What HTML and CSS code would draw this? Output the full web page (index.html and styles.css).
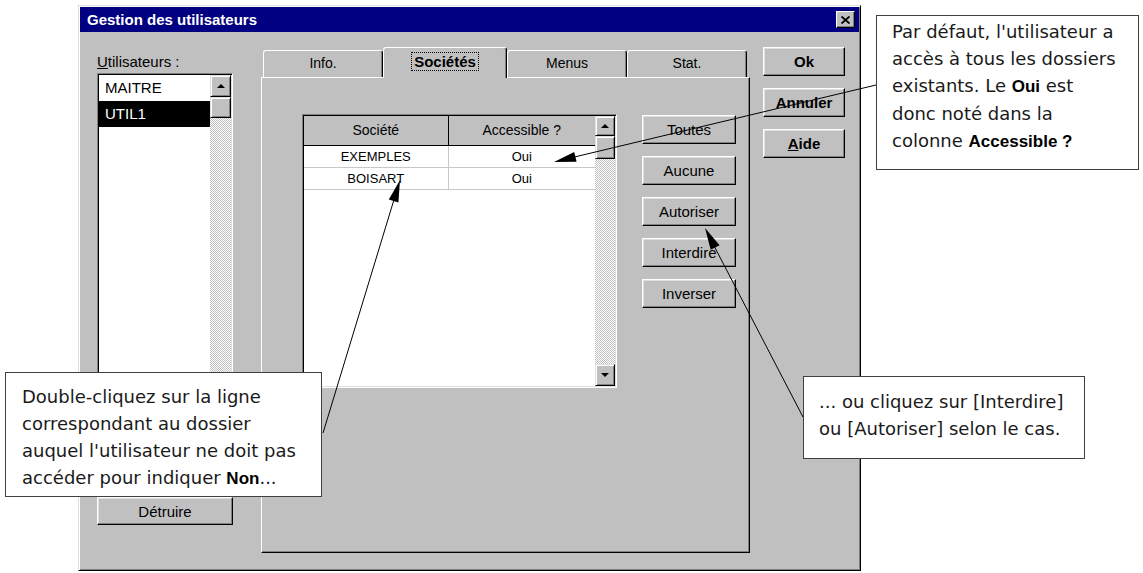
FILE: index.html
```html
<!DOCTYPE html>
<html lang="fr">
<head>
    <meta charset="UTF-8">
    <title>Gestion des utilisateurs</title>
    <link rel="stylesheet" href="styles.css">
</head>
<body>
    <div class="dialog">
        <div class="titlebar">
            <span class="title">Gestion des utilisateurs</span>
            <span class="close">
                <svg width="9" height="8" viewBox="0 0 9 8"><path d="M0.5 0.5 L8.5 7.5 M8.5 0.5 L0.5 7.5" stroke="#000" stroke-width="1.8" fill="none"/></svg>
            </span>
        </div>
        <div class="content">
            <div class="users">
                <div class="label"><u>U</u>tilisateurs :</div>
                <div class="listbox">
                    <ul class="items">
                        <li>MAITRE</li>
                        <li class="selected">UTIL1</li>
                    </ul>
                    <div class="vscroll">
                        <div class="sbtn"><svg width="8" height="4" viewBox="0 0 8 4"><polygon points="0,4 8,4 4,0" fill="#000"/></svg></div>
                        <div class="thumb"></div>
                        <div class="track"></div>
                        <div class="sbtn"><svg width="8" height="4" viewBox="0 0 8 4"><polygon points="0,0 8,0 4,4" fill="#000"/></svg></div>
                    </div>
                </div>
                <button class="btn wide">Détruire</button>
            </div>

            <div class="tabs">
                <div class="tabrow">
                    <div class="tab">Info.</div>
                    <div class="tab active"><span class="focus">Sociétés</span></div>
                    <div class="tab">Menus</div>
                    <div class="tab">Stat.</div>
                </div>
                <div class="panel">
                    <div class="grid">
                        <div class="cells">
                            <table>
                                <tr><th>Société</th><th>Accessible ?</th></tr>
                                <tr><td>EXEMPLES</td><td>Oui</td></tr>
                                <tr><td>BOISART</td><td>Oui</td></tr>
                            </table>
                        </div>
                        <div class="vscroll narrow">
                            <div class="sbtn small"><svg width="8" height="4" viewBox="0 0 8 4"><polygon points="0,4 8,4 4,0" fill="#000"/></svg></div>
                            <div class="thumb tall"></div>
                            <div class="track"></div>
                            <div class="sbtn"><svg width="8" height="4" viewBox="0 0 8 4"><polygon points="0,0 8,0 4,4" fill="#000"/></svg></div>
                        </div>
                    </div>
                    <div class="actions">
                        <button class="btn">Toutes</button>
                        <button class="btn">Aucune</button>
                        <button class="btn">Autoriser</button>
                        <button class="btn">Interdire</button>
                        <button class="btn">Inverser</button>
                    </div>
                </div>
            </div>

            <div class="main-actions">
                <button class="btn bold">Ok</button>
                <button class="btn bold">Annuler</button>
                <button class="btn bold"><u>A</u>ide</button>
            </div>
        </div>
    </div>

    <div class="callout note-top">
        Par défaut, l'utilisateur a<br>
        accès à tous les dossiers<br>
        existants. Le <b>Oui</b> est<br>
        donc noté dans la<br>
        colonne <b>Accessible ?</b>
    </div>
    <div class="callout note-left">
        Double-cliquez sur la ligne<br>
        correspondant au dossier<br>
        auquel l'utilisateur ne doit pas<br>
        accéder pour indiquer <b>Non</b>...
    </div>
    <div class="callout note-right">
        ... ou cliquez sur [Interdire]<br>
        ou [Autoriser] selon le cas.
    </div>

    <svg class="arrows" width="1143" height="573" viewBox="0 0 1143 573">
        <line x1="876" y1="85" x2="566" y2="159" stroke="#000" stroke-width="1"/>
        <polygon points="554,162 574.2,152 576.6,161.8" fill="#000"/>
        <line x1="323" y1="433" x2="396" y2="193" stroke="#000" stroke-width="1"/>
        <polygon points="400,180 398.4,202.5 388.8,199.5" fill="#000"/>
        <line x1="803" y1="417" x2="711" y2="240" stroke="#000" stroke-width="1"/>
        <polygon points="705,228 719.6,245.2 710.7,249.8" fill="#000"/>
    </svg>
</body>
</html>
```

FILE: styles.css
```css
* {
    box-sizing: border-box;
}
body {
    margin: 0;
    width: 1143px;
    height: 573px;
    position: relative;
    overflow: hidden;
    background: #fff;
    font-family: 'Liberation Sans', Arial, sans-serif;
    color: #000;
}

/* window frame */
.dialog {
    margin: 5px 0 0 78px;
    width: 783px;
    height: 566px;
    padding: 1px;
    background: #c0c0c0;
    border: 1px solid;
    border-color: #dfdfdf #000 #000 #dfdfdf;
    box-shadow: inset 1px 1px #fff, inset -1px -1px #808080;
}
.titlebar {
    height: 25px;
    background: #000080;
    display: flex;
    align-items: center;
    justify-content: space-between;
    padding: 0 4px 0 7px;
}
.title {
    color: #fff;
    font-weight: bold;
    font-size: 15px;
}
.close {
    width: 19px;
    height: 17px;
    background: #c0c0c0;
    border: 1px solid;
    border-color: #fff #000 #000 #fff;
    box-shadow: inset -1px -1px #808080;
    display: flex;
    align-items: center;
    justify-content: center;
}
.content {
    display: flex;
    padding: 15px 14px 0 17px;
}

/* shared controls */
.btn {
    display: block;
    width: 100%;
    height: 29px;
    padding: 0;
    background: #c0c0c0;
    border: 1px solid;
    border-color: #fff #000 #000 #fff;
    box-shadow: inset -1px -1px #808080, inset 1px 1px #dfdfdf;
    font-family: 'Liberation Sans', Arial, sans-serif;
    font-size: 15px;
    color: #000;
}
.btn.bold {
    font-weight: bold;
}
.vscroll {
    width: 21px;
    display: flex;
    flex-direction: column;
}
.vscroll.narrow {
    width: 20px;
}
.sbtn, .thumb {
    height: 22px;
    background: #c0c0c0;
    border: 1px solid;
    border-color: #dfdfdf #000 #000 #dfdfdf;
    box-shadow: inset 1px 1px #fff, inset -1px -1px #808080;
    display: flex;
    align-items: center;
    justify-content: center;
}
.sbtn.small {
    height: 20px;
}
.thumb {
    height: 21px;
}
.thumb.tall {
    height: 23px;
}
.track {
    flex: 1;
    background: repeating-conic-gradient(#fff 0 25%, #c0c0c0 0 50%) 0 0 / 2px 2px;
}

/* users column */
.users {
    width: 136px;
    display: flex;
    flex-direction: column;
}
.label {
    margin-top: 7px;
    font-size: 15px;
    line-height: 16px;
}
.listbox {
    margin-top: 3px;
    height: 410px;
    display: flex;
    padding: 1px;
    border: 1px solid;
    border-color: #808080 #fff #fff #808080;
    box-shadow: inset 1px 1px #000, inset -1px -1px #dfdfdf;
}
.items {
    flex: 1;
    margin: 0;
    padding: 0;
    list-style: none;
    background: #fff;
}
.items li {
    height: 26px;
    line-height: 26px;
    padding-left: 6px;
    font-size: 15px;
}
.items li.selected {
    background: #000;
    color: #fff;
}
.btn.wide {
    margin-top: 14px;
    height: 28px;
}

/* tabs */
.tabs {
    width: 489px;
    margin-left: 28px;
    display: flex;
    flex-direction: column;
}
.tabrow {
    height: 30px;
    display: flex;
    align-items: flex-end;
    padding-left: 2px;
}
.tab {
    flex: 0 0 120px;
    height: 27px;
    padding-bottom: 2px;
    border: 1px solid;
    border-bottom: 0;
    border-color: #fff #000 transparent #fff;
    border-radius: 3px 3px 0 0;
    box-shadow: inset -1px 0 #808080;
    font-size: 14px;
    display: flex;
    align-items: center;
    justify-content: center;
}
.tab.active {
    flex-basis: 124px;
    height: 31px;
    padding-bottom: 4px;
    margin-bottom: -1px;
    position: relative;
    z-index: 1;
    background: #c0c0c0;
    font-size: 15px;
    font-weight: bold;
}
.focus {
    outline: 1px dotted #000;
    padding: 0 2px;
}
.panel {
    height: 476px;
    display: flex;
    align-items: flex-start;
    padding: 36px 0 0 40px;
    border: 1px solid;
    border-color: #fff #000 #000 #fff;
    box-shadow: inset -1px -1px #808080;
}

/* grid */
.grid {
    width: 315px;
    height: 274px;
    display: flex;
    padding: 1px;
    border: 1px solid;
    border-color: #808080 #fff #fff #808080;
    box-shadow: inset 1px 1px #000, inset -1px -1px #dfdfdf;
}
.cells {
    flex: 1;
    background: #fff;
}
table {
    width: 100%;
    border-collapse: collapse;
}
th {
    height: 29px;
    background: #c0c0c0;
    border-bottom: 1px solid #000;
    font-size: 14px;
    font-weight: normal;
}
th:first-child {
    width: 144px;
    border-right: 1px solid #000;
}
td {
    height: 22px;
    padding: 0;
    text-align: center;
    font-size: 13px;
    border-bottom: 1px solid #c8c8c8;
}
td:first-child {
    border-right: 1px solid #c8c8c8;
}
.actions {
    width: 94px;
    margin: 1px 0 0 25px;
    display: flex;
    flex-direction: column;
    gap: 12px;
}
.main-actions {
    width: 82px;
    margin-left: 13px;
    display: flex;
    flex-direction: column;
    gap: 12px;
}

/* annotations laid over the screenshot */
.callout {
    position: absolute;
    background: #fff;
    border: 1px solid #404040;
    font-family: 'DejaVu Sans', sans-serif;
    font-size: 18px;
    line-height: 27px;
    color: #1a1a1a;
    white-space: nowrap;
}
.callout b {
    font-family: 'Liberation Sans', Arial, sans-serif;
    font-size: 17px;
    color: #000;
}
.note-top {
    left: 876px;
    top: 15px;
    width: 263px;
    height: 155px;
    padding: 2px 0 0 15px;
}
.note-left {
    left: 5px;
    top: 372px;
    width: 317px;
    height: 125px;
    padding: 10px 0 0 16px;
}
.note-right {
    left: 803px;
    top: 376px;
    width: 282px;
    height: 83px;
    padding: 11px 0 0 15px;
}
.arrows {
    position: absolute;
    left: 0;
    top: 0;
    pointer-events: none;
}
```
